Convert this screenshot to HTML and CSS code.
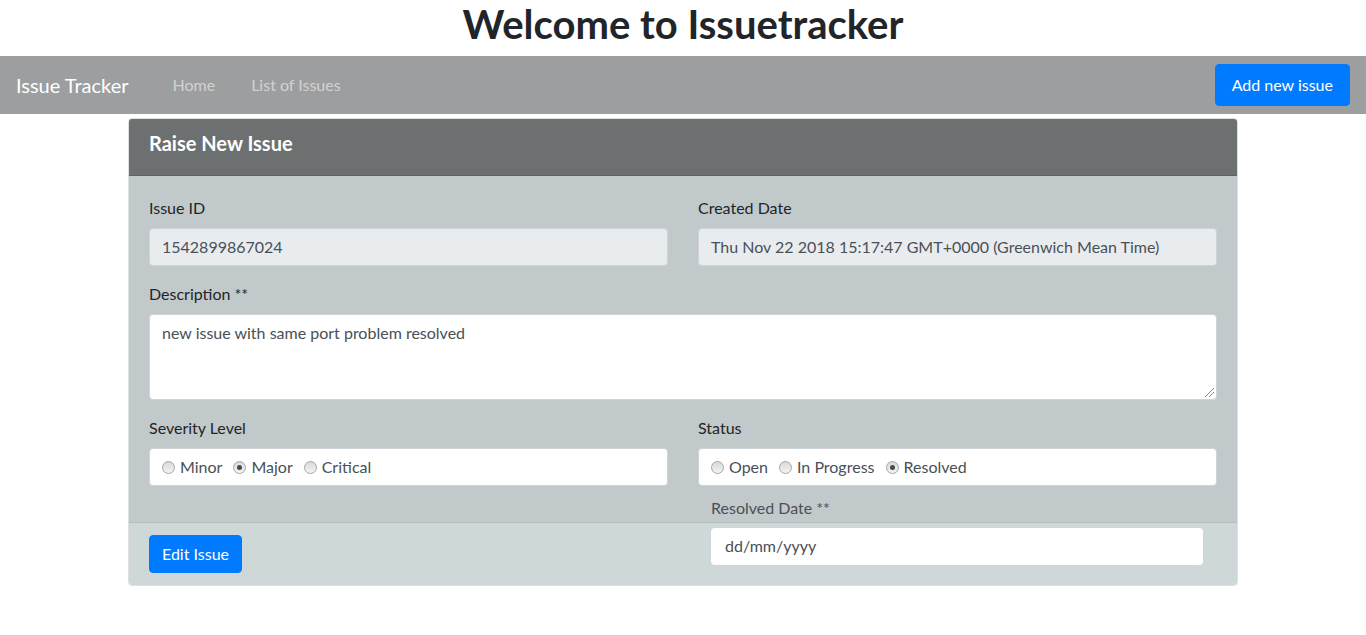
FILE: index.html
```html
<!DOCTYPE html>
<html lang="en">
<head>
<meta charset="utf-8">
<title>Issuetracker</title>
<link rel="stylesheet" href="styles.css">
</head>
<body>
<h1 class="title">Welcome to Issuetracker</h1>
<nav class="navbar">
  <a class="brand" href="#">Issue Tracker</a>
  <ul class="nav">
    <li><a class="nav-link" href="#">Home</a></li>
    <li><a class="nav-link" href="#">List of Issues</a></li>
  </ul>
  <button class="btn btn-primary btn-nav" type="button">Add new issue</button>
</nav>
<main class="container">
  <div class="card">
    <div class="card-header"><h5 class="card-title">Raise New Issue</h5></div>
    <div class="card-body">
      <div class="row">
        <div class="col">
          <div class="form-group">
            <label class="label">Issue ID</label>
            <div class="form-control readonly">1542899867024</div>
          </div>
        </div>
        <div class="col">
          <div class="form-group">
            <label class="label">Created Date</label>
            <div class="form-control readonly">Thu Nov 22 2018 15:17:47 GMT+0000 (Greenwich Mean Time)</div>
          </div>
        </div>
      </div>
      <div class="form-group">
        <label class="label">Description **</label>
        <div class="form-control textarea">new issue with same port problem resolved<span class="grip"></span></div>
      </div>
      <div class="row">
        <div class="col">
          <div class="form-group">
            <label class="label">Severity Level</label>
            <div class="form-control radios">
              <span class="radio"></span><span class="radio-label">Minor</span>
              <span class="radio checked"></span><span class="radio-label">Major</span>
              <span class="radio"></span><span class="radio-label">Critical</span>
            </div>
          </div>
        </div>
        <div class="col">
          <div class="form-group">
            <label class="label">Status</label>
            <div class="form-control radios">
              <span class="radio"></span><span class="radio-label">Open</span>
              <span class="radio"></span><span class="radio-label">In Progress</span>
              <span class="radio checked"></span><span class="radio-label">Resolved</span>
            </div>
          </div>
        </div>
      </div>
    </div>
    <div class="card-footer">
      <button class="btn btn-primary" type="button">Edit Issue</button>
    </div>
    <div class="resolved">
      <label class="label muted">Resolved Date **</label>
      <div class="date-input">dd/mm/yyyy</div>
    </div>
  </div>
</main>
</body>
</html>
```
FILE: styles.css
```css
* { box-sizing: border-box; }
body {
  margin: 0;
  font-family: Lato, "Liberation Sans", sans-serif;
  font-size: 16px;
  line-height: 1.5;
  color: #212529;
  background: #fff;
}
.title {
  margin: 0 0 8px;
  font-size: 40px;
  line-height: 48px;
  font-weight: 700;
  text-align: center;
  color: #212529;
}
.navbar {
  display: flex;
  align-items: center;
  background: #9d9e9f;
  padding: 8px 16px;
}
.brand {
  font-size: 20px;
  line-height: 30px;
  color: #fff;
  text-decoration: none;
  margin-right: 26px;
}
.nav {
  display: flex;
  list-style: none;
  margin: 0;
  padding: 0;
  flex: 1;
}
.nav-link {
  display: block;
  padding: 8px 18px;
  color: rgba(255,255,255,0.55);
  text-decoration: none;
}
.btn {
  font-family: inherit;
  font-size: 16px;
  line-height: 24px;
  border: 1px solid transparent;
  border-radius: 4px;
  padding: 6px 12px;
  cursor: pointer;
}
.btn-primary {
  background: #007bff;
  border-color: #007bff;
  color: #fff;
}
.btn-nav {
  padding: 8px 16px;
}
.container {
  width: 1140px;
  margin: 0 auto;
  padding: 4px 15px 0;
}
.card {
  position: relative;
  border: 1px solid rgba(0,0,0,0.125);
  border-radius: 4px;
}
.card-header {
  background: #6c7070;
  padding: 12px 20px;
  border-bottom: 1px solid rgba(0,0,0,0.125);
  border-radius: 3px 3px 0 0;
}
.card-title {
  margin: 0 0 8px;
  font-size: 20px;
  line-height: 24px;
  font-weight: 700;
  color: #fff;
}
.card-body {
  background: #c2c9cb;
  padding: 20px;
}
.row {
  display: flex;
  margin: 0 -15px;
}
.col {
  flex: 1 1 0;
  padding: 0 15px;
}
.form-group { margin-bottom: 16px; }
.label {
  display: block;
  margin-bottom: 8px;
  line-height: 24px;
  color: #212529;
}
.label.muted { color: #495057; }
.form-control {
  display: block;
  width: 100%;
  height: 38px;
  padding: 6px 12px;
  line-height: 24px;
  color: #495057;
  background: #fff;
  border: 1px solid #ced4da;
  border-radius: 4px;
  white-space: nowrap;
}
.form-control.readonly { background: #e9ecef; }
.form-control.textarea {
  position: relative;
  height: 86px;
  white-space: normal;
}
.grip {
  position: absolute;
  right: 2px;
  bottom: 2px;
  width: 9px;
  height: 9px;
  background: linear-gradient(135deg, transparent 45%, #888 45%, #888 52%, transparent 52%, transparent 70%, #888 70%, #888 77%, transparent 77%);
}
.radios {
  display: flex;
  align-items: center;
}
.radio {
  display: inline-block;
  width: 13px;
  height: 13px;
  border-radius: 50%;
  border: 1px solid #a6a6a6;
  background: linear-gradient(#d8d8d8, #f4f4f4);
  margin-right: 5px;
  position: relative;
  flex: none;
}
.radio.checked::after {
  content: "";
  position: absolute;
  left: 3px;
  top: 3px;
  width: 5px;
  height: 5px;
  border-radius: 50%;
  background: #4a4a4a;
}
.radio-label { margin-right: 11px; }
.card-footer {
  background: #cfd8d9;
  padding: 12px 20px;
  border-top: 1px solid rgba(0,0,0,0.125);
  border-radius: 0 0 3px 3px;
}
.resolved {
  position: absolute;
  left: 582px;
  top: 377px;
  width: 492px;
}
.date-input {
  height: 37px;
  padding: 6px 14px;
  line-height: 24px;
  color: #495057;
  background: #fff;
  border-radius: 4px;
}
```
